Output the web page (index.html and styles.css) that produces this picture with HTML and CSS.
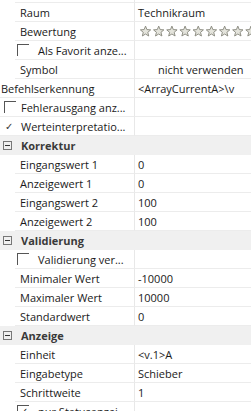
FILE: index.html
```html
<!DOCTYPE html>
<html lang="de">
<head>
    <meta charset="UTF-8">
    <title>Eigenschaften</title>
    <link rel="stylesheet" href="styles.css">
</head>
<body>
    <div class="grid">
        <div class="row"><div class="name"></div><div class="val"></div></div>
        <div class="row"><div class="name">Raum</div><div class="val">Technikraum</div></div>
        <div class="row"><div class="name">Bewertung</div><div class="val stars">
            <svg width="120" height="14" viewBox="0 0 120 14">
                <defs>
                    <path id="star" d="M6 0.8 L7.5 4.5 L11.5 4.8 L8.4 7.4 L9.4 11.3 L6 9.2 L2.6 11.3 L3.6 7.4 L0.5 4.8 L4.5 4.5 Z"/>
                </defs>
                <use href="#star" x="2" y="1"/>
                <use href="#star" x="16" y="1"/>
                <use href="#star" x="30" y="1"/>
                <use href="#star" x="44" y="1"/>
                <use href="#star" x="58" y="1"/>
                <use href="#star" x="72" y="1"/>
                <use href="#star" x="86" y="1"/>
                <use href="#star" x="100" y="1"/>
                <use href="#star" x="114" y="1"/>
            </svg>
        </div></div>
        <div class="row"><div class="name"><span class="box"></span>Als Favorit anze...</div><div class="val"></div></div>
        <div class="row"><div class="name">Symbol</div><div class="val center">nicht verwenden</div></div>
        <div class="row wide"><div class="name">Befehlserkennung</div><div class="val">&lt;ArrayCurrentA&gt;\v</div></div>
        <div class="row flat"><div class="name"><span class="box small"></span>Fehlerausgang anz...</div><div class="val"></div></div>
        <div class="row flat"><div class="name"><span class="tick">&#10003;</span>Werteinterpretatio...</div><div class="val"></div></div>

        <div class="cat"><span class="minus"></span>Korrektur</div>
        <div class="row"><div class="name">Eingangswert 1</div><div class="val">0</div></div>
        <div class="row"><div class="name">Anzeigewert 1</div><div class="val">0</div></div>
        <div class="row"><div class="name">Eingangswert 2</div><div class="val">100</div></div>
        <div class="row"><div class="name">Anzeigewert 2</div><div class="val">100</div></div>

        <div class="cat"><span class="minus"></span>Validierung</div>
        <div class="row"><div class="name"><span class="box"></span>Validierung ver...</div><div class="val"></div></div>
        <div class="row"><div class="name">Minimaler Wert</div><div class="val">-10000</div></div>
        <div class="row"><div class="name">Maximaler Wert</div><div class="val">10000</div></div>
        <div class="row"><div class="name">Standardwert</div><div class="val">0</div></div>

        <div class="cat"><span class="minus"></span>Anzeige</div>
        <div class="row"><div class="name">Einheit</div><div class="val">&lt;v.1&gt;A</div></div>
        <div class="row"><div class="name">Eingabetype</div><div class="val">Schieber</div></div>
        <div class="row"><div class="name">Schrittweite</div><div class="val">1</div></div>
        <div class="row"><div class="name"><span class="box checked">&#10003;</span>nur Statusanzei...</div><div class="val"></div></div>
    </div>
</body>
</html>
```

FILE: styles.css
```css
body {
    margin: 0;
    background-color: #fff;
    font-family: "Open Sans", "Noto Sans", sans-serif;
    font-size: 11px;
    color: #1a1a1a;
    overflow: hidden;
}

.grid {
    margin-top: -16px;
}

.row {
    display: flex;
    height: 19px;
}

.name {
    display: flex;
    align-items: center;
    width: 114px;
    margin-left: 15px;
    padding-left: 5px;
    border-right: 1px solid #e8e8e8;
    border-bottom: 1px solid #ececec;
    white-space: nowrap;
    overflow: hidden;
}

.val {
    flex: 1;
    display: flex;
    align-items: center;
    padding-left: 3px;
    border-bottom: 1px solid #ececec;
    white-space: nowrap;
    overflow: hidden;
}

.val.center {
    padding-left: 23px;
}

.row.wide .name {
    margin-left: 0;
    padding-left: 1px;
    width: 133px;
    overflow: visible;
}

.row.flat .name {
    margin-left: 0;
    padding-left: 3px;
    width: 131px;
}

.stars svg {
    fill: #e4e4dc;
    stroke: #8a8a80;
    stroke-width: 1;
}

.box {
    display: inline-block;
    width: 12px;
    height: 12px;
    margin-left: -3px;
    margin-right: 9px;
    border-top: 1px solid #555;
    border-left: 1px solid #555;
    box-sizing: border-box;
    font-size: 10px;
    line-height: 10px;
    text-align: center;
}

.box.small {
    margin-left: 1px;
    margin-right: 5px;
}

.tick {
    display: inline-block;
    width: 12px;
    margin-right: 6px;
    font-size: 10px;
    color: #333;
    text-align: center;
}

.cat {
    display: flex;
    align-items: center;
    height: 19px;
    background-color: #f0f0f0;
    font-weight: bold;
    color: #3a3a3a;
    padding-left: 3px;
}

.minus {
    position: relative;
    width: 9px;
    height: 9px;
    margin-right: 9px;
    border: 1px solid #777;
    box-sizing: border-box;
}

.minus::after {
    content: "";
    position: absolute;
    left: 1px;
    right: 1px;
    top: 3px;
    height: 1px;
    background-color: #333;
}
```
